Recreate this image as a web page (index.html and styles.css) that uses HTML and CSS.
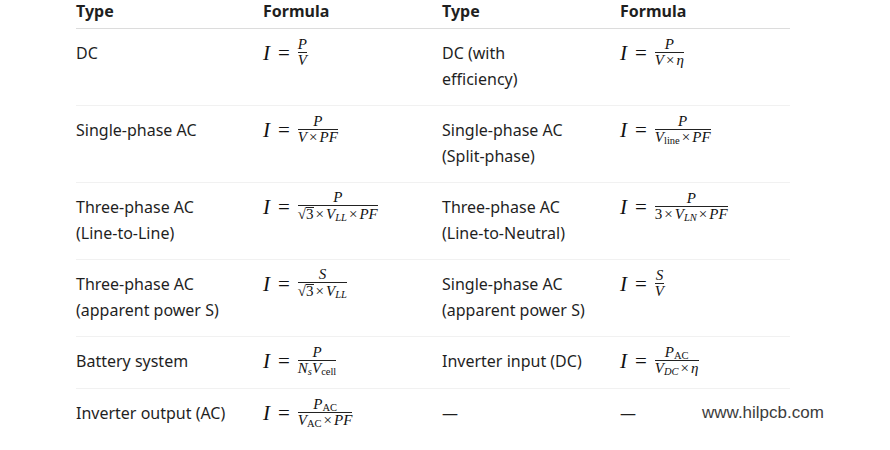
FILE: index.html
```html
<!DOCTYPE html>
<html>
<head>
<meta charset="utf-8">
<link rel="stylesheet" href="styles.css">
</head>
<body>
<div class="page">
  <div class="table">
    <div class="row head">
      <div class="cell">Type</div>
      <div class="cell">Formula</div>
      <div class="cell">Type</div>
      <div class="cell">Formula</div>
    </div>
    <div class="row">
      <div class="cell">DC</div>
      <div class="cell"><span class="m"><i>I</i><span class="eq">=</span><span class="frac"><span class="num"><i>P</i></span><span class="den"><i>V</i></span></span></span></div>
      <div class="cell">DC (with<br>efficiency)</div>
      <div class="cell"><span class="m"><i>I</i><span class="eq">=</span><span class="frac"><span class="num"><i>P</i></span><span class="den"><i>V</i><span class="op">×</span><i>η</i></span></span></span></div>
    </div>
    <div class="row">
      <div class="cell">Single-phase AC</div>
      <div class="cell"><span class="m"><i>I</i><span class="eq">=</span><span class="frac"><span class="num"><i>P</i></span><span class="den"><i>V</i><span class="op">×</span><i>PF</i></span></span></span></div>
      <div class="cell">Single-phase AC<br>(Split-phase)</div>
      <div class="cell"><span class="m"><i>I</i><span class="eq">=</span><span class="frac"><span class="num"><i>P</i></span><span class="den"><i>V</i><sub>line</sub><span class="op">×</span><i>PF</i></span></span></span></div>
    </div>
    <div class="row">
      <div class="cell">Three-phase AC<br>(Line-to-Line)</div>
      <div class="cell"><span class="m"><i>I</i><span class="eq">=</span><span class="frac"><span class="num"><i>P</i></span><span class="den"><span class="sqrt">√<span class="rad">3</span></span><span class="op">×</span><i>V</i><sub><i>LL</i></sub><span class="op">×</span><i>PF</i></span></span></span></div>
      <div class="cell">Three-phase AC<br>(Line-to-Neutral)</div>
      <div class="cell"><span class="m"><i>I</i><span class="eq">=</span><span class="frac"><span class="num"><i>P</i></span><span class="den">3<span class="op">×</span><i>V</i><sub><i>LN</i></sub><span class="op">×</span><i>PF</i></span></span></span></div>
    </div>
    <div class="row">
      <div class="cell">Three-phase AC<br>(apparent power S)</div>
      <div class="cell"><span class="m"><i>I</i><span class="eq">=</span><span class="frac"><span class="num"><i>S</i></span><span class="den"><span class="sqrt">√<span class="rad">3</span></span><span class="op">×</span><i>V</i><sub><i>LL</i></sub></span></span></span></div>
      <div class="cell">Single-phase AC<br>(apparent power S)</div>
      <div class="cell"><span class="m"><i>I</i><span class="eq">=</span><span class="frac"><span class="num"><i>S</i></span><span class="den"><i>V</i></span></span></span></div>
    </div>
    <div class="row">
      <div class="cell">Battery system</div>
      <div class="cell"><span class="m"><i>I</i><span class="eq">=</span><span class="frac"><span class="num"><i>P</i></span><span class="den"><i>N</i><sub><i>s</i></sub><i>V</i><sub>cell</sub></span></span></span></div>
      <div class="cell">Inverter input (DC)</div>
      <div class="cell"><span class="m"><i>I</i><span class="eq">=</span><span class="frac"><span class="num"><i>P</i><sub>AC</sub></span><span class="den"><i>V</i><sub><i>DC</i></sub><span class="op">×</span><i>η</i></span></span></span></div>
    </div>
    <div class="row last">
      <div class="cell">Inverter output (AC)</div>
      <div class="cell"><span class="m"><i>I</i><span class="eq">=</span><span class="frac"><span class="num"><i>P</i><sub>AC</sub></span><span class="den"><i>V</i><sub>AC</sub><span class="op">×</span><i>PF</i></span></span></span></div>
      <div class="cell">—</div>
      <div class="cell">—</div>
    </div>
  </div>
  <div class="watermark">www.hilpcb.com</div>
</div>
</body>
</html>
```

FILE: styles.css
```css
html, body {
  margin: 0;
  padding: 0;
  background: #ffffff;
}

.page {
  position: relative;
  width: 890px;
  height: 450px;
  overflow: hidden;
  font-family: "Noto Sans", "Open Sans", sans-serif;
  color: #1f1f1f;
  font-size: 16px;
}

.table {
  margin-left: 76px;
  width: 714px;
  display: flex;
  flex-direction: column;
}

.row {
  display: grid;
  grid-template-columns: 187px 179px 178px 170px;
  border-bottom: 1px solid #f1f1f1;
}

.row.head {
  border-bottom: 1px solid #dcdcdc;
}

.row.last {
  border-bottom: none;
}

.cell {
  padding: 11px 0 13px;
  line-height: 26px;
}

.head .cell {
  font-weight: 700;
  padding: 0 0 6px;
  line-height: 22px;
}

.m {
  font-family: "Liberation Serif", "DejaVu Serif", serif;
  font-size: 21px;
  display: inline-flex;
  align-items: center;
  white-space: nowrap;
  color: #111;
  height: 26px;
}

.m i {
  font-style: italic;
}

.eq {
  margin: 0 6px 0 8px;
}

.frac {
  display: inline-flex;
  flex-direction: column;
  align-items: center;
  font-size: 15px;
  line-height: 13px;
  margin-left: 1px;
  padding: 0 1px;
  position: relative;
  top: -1px;
}

.num {
  padding-bottom: 1px;
}

.den {
  border-top: 1px solid #222;
  padding-top: 1px;
  width: 100%;
  text-align: center;
}

.op {
  margin: 0 2px;
}

.frac sub {
  font-size: 10.5px;
  vertical-align: -2px;
  line-height: 0;
}

.sqrt {
  display: inline-block;
}

.rad {
  border-top: 1px solid #222;
  line-height: 13px;
  display: inline-block;
}

.watermark {
  position: absolute;
  left: 702px;
  top: 403px;
  font-family: "Liberation Sans", Arial, sans-serif;
  font-size: 17px;
  color: #3c3c3c;
}
```
